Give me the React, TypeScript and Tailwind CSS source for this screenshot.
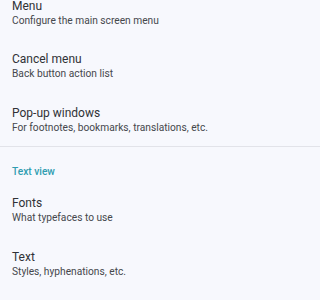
const items1 = [
  { title: "Menu", sub: "Configure the main screen menu" },
  { title: "Cancel menu", sub: "Back button action list" },
  { title: "Pop-up windows", sub: "For footnotes, bookmarks, translations, etc." },
];

const items2 = [
  { title: "Fonts", sub: "What typefaces to use" },
  { title: "Text", sub: "Styles, hyphenations, etc." },
];

function Row({ title, sub }: { title: string; sub: string }) {
  return (
    <div className="flex flex-col px-3 py-[11.75px]">
      <div className="text-[12px] leading-[16px] text-[#303236]">{title}</div>
      <div className="text-[10.2px] leading-[14px] text-[#45474c]">{sub}</div>
    </div>
  );
}

export default function App() {
  return (
    <div className="min-h-screen w-full overflow-hidden bg-[#f7f8fd] font-['Roboto',sans-serif]">
      <div className="-mt-[14.15px] flex flex-col">
        {items1.map(i => <Row key={i.title} {...i} />)}
        <div className="h-px bg-[#e2e3e9]" />
        <div className="px-3 pt-[17.5px] pb-[4.5px] text-[10.2px] leading-[14px] font-medium text-[#2f9db1]">
          Text view
        </div>
        {items2.map(i => <Row key={i.title} {...i} />)}
      </div>
    </div>
  );
}
